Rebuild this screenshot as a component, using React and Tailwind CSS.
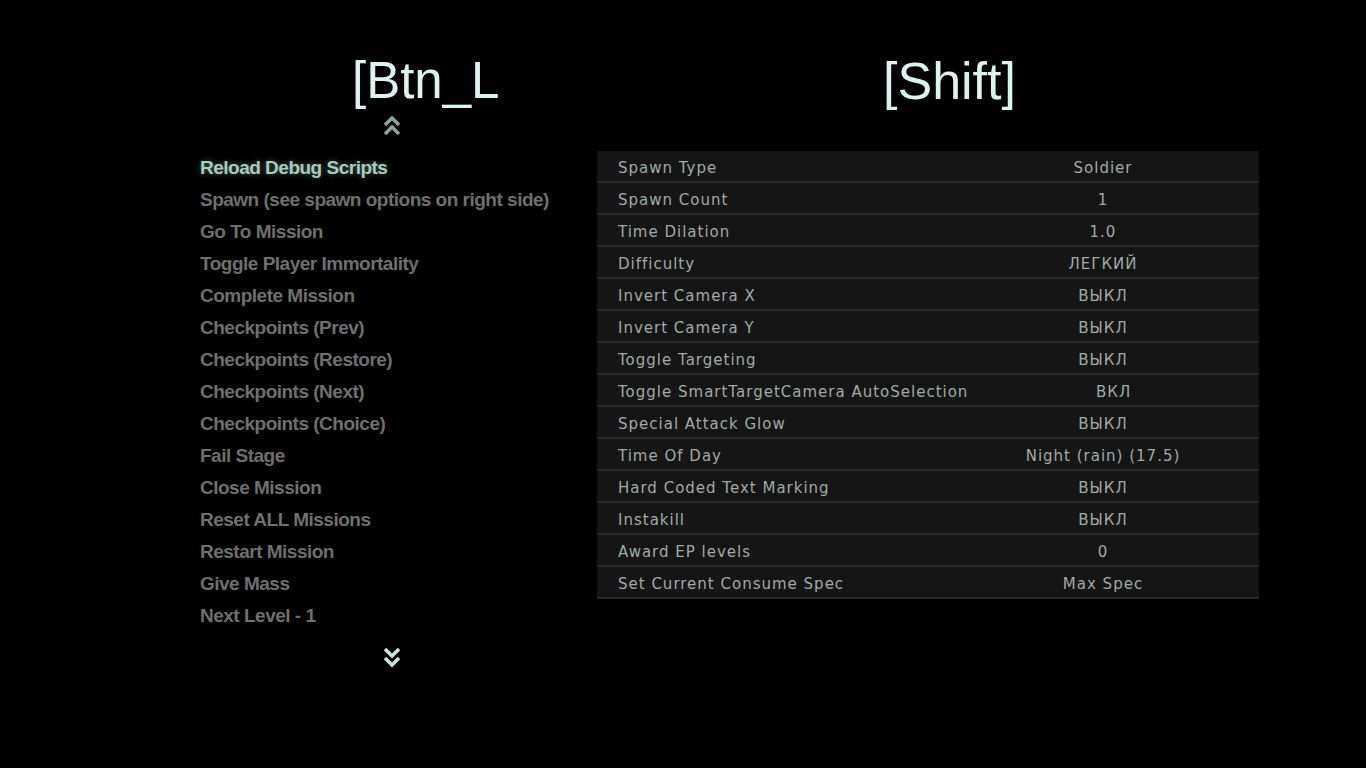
const menu = [
  "Reload Debug Scripts",
  "Spawn (see spawn options on right side)",
  "Go To Mission",
  "Toggle Player Immortality",
  "Complete Mission",
  "Checkpoints (Prev)",
  "Checkpoints (Restore)",
  "Checkpoints (Next)",
  "Checkpoints (Choice)",
  "Fail Stage",
  "Close Mission",
  "Reset ALL Missions",
  "Restart Mission",
  "Give Mass",
  "Next Level - 1",
];

const options = [
  ["Spawn Type", "Soldier"],
  ["Spawn Count", "1"],
  ["Time Dilation", "1.0"],
  ["Difficulty", "ЛЕГКИЙ"],
  ["Invert Camera X", "ВЫКЛ"],
  ["Invert Camera Y", "ВЫКЛ"],
  ["Toggle Targeting", "ВЫКЛ"],
  ["Toggle SmartTargetCamera AutoSelection", "ВКЛ"],
  ["Special Attack Glow", "ВЫКЛ"],
  ["Time Of Day", "Night (rain) (17.5)"],
  ["Hard Coded Text Marking", "ВЫКЛ"],
  ["Instakill", "ВЫКЛ"],
  ["Award EP levels", "0"],
  ["Set Current Consume Spec", "Max Spec"],
];

const Chevrons = ({ up, color }) => (
  <svg width="20" height="22" viewBox="0 0 20 22">
    {up ? (
      <g fill="none" stroke={color} strokeWidth="3.5" strokeLinejoin="miter">
        <polyline points="3,10 10,3 17,10" />
        <polyline points="3,19 10,12 17,19" />
      </g>
    ) : (
      <g fill="none" stroke={color} strokeWidth="3.5" strokeLinejoin="miter">
        <polyline points="3,3 10,10 17,3" />
        <polyline points="3,12 10,19 17,12" />
      </g>
    )}
  </svg>
);

export default function App() {
  return (
    <div className="w-[1366px] h-[768px] bg-black overflow-hidden flex">
      {/* left column */}
      <div className="w-[597px] shrink-0 pl-[200px] pt-[52px] flex flex-col">
        <div
          className="pl-[152px] h-[58px] text-[51px] leading-[58px] text-[#dcf3ee]"
          style={{ fontFamily: "'Liberation Sans', Arial, sans-serif" }}
        >
          [Btn_L
        </div>
        <div className="pl-[182px] h-[42px] pt-[5px]">
          <Chevrons up color="#8aa69d" />
        </div>
        <ul
          className="flex flex-col font-bold text-[19px] tracking-[-0.5px] text-[#6f6f6f]"
          style={{ fontFamily: "'Liberation Sans', Arial, sans-serif" }}
        >
          {menu.map((m, i) => (
            <li
              key={m}
              className={
                "h-[32px] leading-[32px] whitespace-nowrap " +
                (i === 0 ? "text-[#a9cabe] [text-shadow:0_0_6px_rgba(160,220,200,0.45)]" : "")
              }
            >
              {m}
            </li>
          ))}
        </ul>
        <div className="pl-[182px] pt-[14px]">
          <Chevrons color="#c6e6de" />
        </div>
      </div>

      {/* right column */}
      <div className="w-[662px] shrink-0 pt-[52px] flex flex-col">
        <div
          className="pl-[286px] h-[99px] text-[52px] leading-[58px] text-[#dcf3ee]"
          style={{ fontFamily: "'Liberation Sans', Arial, sans-serif" }}
        >
          [Shift]
        </div>
        <div
          className="bg-[#151515] text-[15px] tracking-[1px] text-[#a2aaa7]"
          style={{ fontFamily: "'DejaVu Sans', sans-serif" }}
        >
          {options.map(([k, v]) => (
            <div key={k} className="h-[32px] pt-[4px] flex items-center border-b-2 border-[#262626]">
              <div className="pl-[21px] flex-1 whitespace-nowrap">{k}</div>
              <div className="w-[312px] text-center whitespace-nowrap">{v}</div>
            </div>
          ))}
        </div>
      </div>
    </div>
  );
}
